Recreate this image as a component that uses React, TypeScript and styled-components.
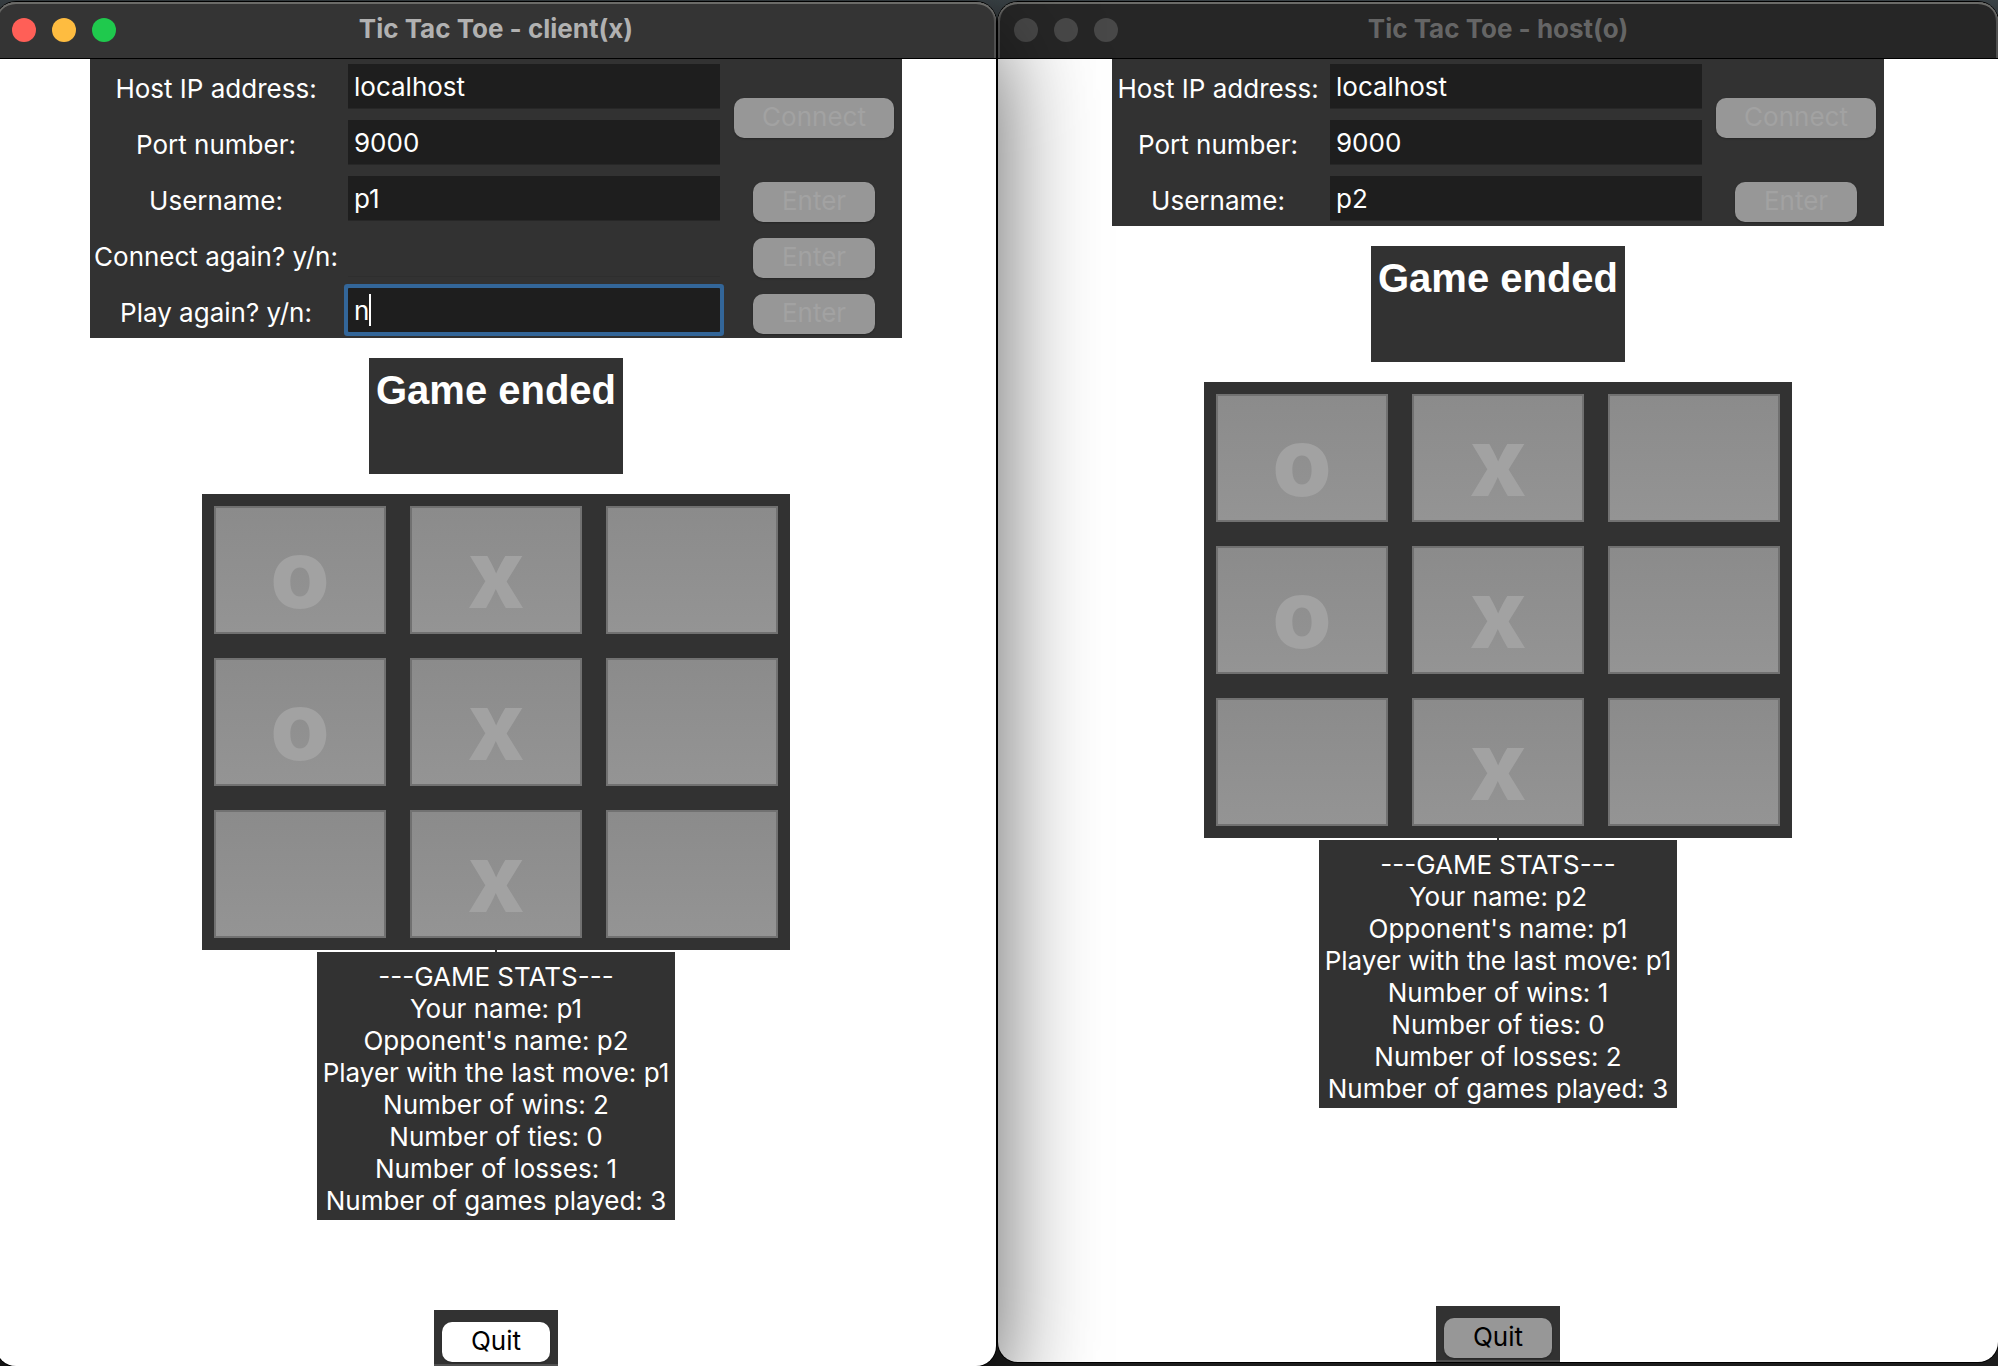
import React from 'react';
import styled, { createGlobalStyle } from 'styled-components';

const UI = `Inter, "Liberation Sans", sans-serif`;
const PANEL = '#323232';

const GlobalStyle = createGlobalStyle`
  * { box-sizing: border-box; }
  html, body, #root { height: 100%; }
  body {
    margin: 0;
    overflow: hidden;
    background: linear-gradient(#3a4246, #1c1c1c 64px);
    font-family: ${UI};
    font-size: 26px;
    line-height: 32px;
    color: #fff;
  }
`;

const Desktop = styled.main`
  display: grid;
  grid-template-columns: 1fr 1fr;
  gap: 2px;
  min-height: 100%;
  margin-left: -4px;
  padding-top: 2px;
`;

const Window = styled.section<{ $active: boolean }>`
  display: flex;
  flex-direction: column;
  position: relative;
  z-index: ${p => (p.$active ? 1 : 0)};
  margin-bottom: ${p => (p.$active ? 0 : 4)}px;
  border-radius: 20px;
  background: #fff;
  box-shadow: 0 0 0 1px #000${p => (p.$active ? ', 0 36px 100px rgba(0, 0, 0, 0.66)' : '')};
`;

const TitleBar = styled.header<{ $active: boolean }>`
  display: grid;
  grid-template-columns: 1fr auto 1fr;
  align-items: center;
  position: relative;
  height: 56px;
  padding: 0 16px;
  border-radius: 20px 20px 0 0;
  background: ${p => (p.$active ? '#343434' : '#262626')};
  color: ${p => (p.$active ? '#b1b1b1' : '#656565')};
  box-shadow: inset 0 2px 0 #6b6b68, inset 2px 0 0 #505050, inset -2px 0 0 #505050, 0 1px 0 #000;
`;

const Lights = styled.div`
  display: flex;
  gap: 16px;
`;

const Light = styled.button<{ $color: string }>`
  width: 24px;
  height: 24px;
  padding: 0;
  border: 0;
  border-radius: 50%;
  background: ${p => p.$color};
`;

const Title = styled.h1`
  margin: 0;
  padding-bottom: 2px;
  font-size: 26px;
  font-weight: 700;
  line-height: 32px;
`;

const Content = styled.div`
  display: flex;
  flex-direction: column;
  align-items: center;
  flex: 1;
`;

const Form = styled.form<{ $labelWidth: number }>`
  display: grid;
  grid-template-columns: ${p => p.$labelWidth}px 384px 176px;
  grid-auto-rows: 56px;
  background: ${PANEL};
`;

const Label = styled.label`
  grid-column: 1;
  padding-top: 3px;
  line-height: 56px;
  text-align: center;
  white-space: nowrap;
`;

const FieldCell = styled.div`
  grid-column: 2;
  position: relative;
  padding: 6px;
`;

const Field = styled.input<{ $focused?: boolean }>`
  display: block;
  width: 100%;
  height: 44px;
  padding: 0 6px;
  border: 0;
  outline: 0;
  border-radius: ${p => (p.$focused ? 1 : 0)}px;
  background: #1e1e1e;
  color: #fff;
  font: 26px/32px ${UI};
  box-shadow: ${p => (p.$focused ? '0 0 0 4px #336699' : '0 1px 0 #272727')};
  caret-color: transparent;
  &:disabled { background: #323232; box-shadow: 0 1px 0 #2e2e2e; }
`;

/* Steady insertion point, laid over the field after the text it holds. */
const CaretLine = styled.div`
  position: absolute;
  top: 12px;
  left: 12px;
  display: flex;
  pointer-events: none;
  color: transparent;
  &::after {
    content: '';
    width: 2px;
    height: 32px;
    background: #fff;
  }
`;

const ButtonCell = styled.div<{ $span: number }>`
  grid-column: 3;
  grid-row: span ${p => p.$span};
  display: flex;
  align-items: center;
  justify-content: center;
  padding-top: 8px;
`;

const PushButton = styled.button<{ $width: number; $white?: boolean }>`
  width: ${p => p.$width}px;
  height: 40px;
  padding: 0 0 2px;
  border: 0;
  border-radius: 10px;
  background: ${p => (p.$white ? '#fff' : '#979797')};
  box-shadow: 0 1px 2px rgba(0, 0, 0, 0.25);
  color: #000;
  font: 26px/32px ${UI};
  &:disabled { color: #a2a2a2; }
`;

const Status = styled.p`
  min-height: 116px;
  margin: 20px 0;
  padding: 9px 7px;
  background: ${PANEL};
  font: bold 40px/46px "Liberation Sans", Arial, sans-serif;
`;

const Board = styled.div`
  display: grid;
  grid-template-columns: repeat(3, 172px);
  grid-auto-rows: 128px;
  gap: 24px;
  padding: 12px;
  background: ${PANEL};
`;

const Cell = styled.button`
  padding: 6px 0 0;
  border: 2px solid #717171;
  background: linear-gradient(#8b8b8b, #949494);
  color: #a2a2a2;
  font: 800 96px/116px ${UI};
`;

const EmptyLabel = styled.div`
  width: 2px;
  height: 2px;
  background: ${PANEL};
`;

const Stats = styled.ul`
  width: 358px;
  margin: 0;
  padding: 9px 0 3px;
  list-style: none;
  background: ${PANEL};
  text-align: center;
  white-space: nowrap;
`;

const QuitFrame = styled.div`
  display: flex;
  margin-top: auto;
  padding: 12px 8px 2px;
  border-bottom: 2px solid #505050;
  background: ${PANEL};
`;

type Row = { label: string; value: string; action?: string; disabled?: boolean; focused?: boolean };

type Game = {
  id: string;
  title: string;
  active: boolean;
  labelWidth: number;
  rows: Row[];
  stats: string[];
};

const MARKS = ['o', 'x', '', 'o', 'x', '', '', 'x', ''];

const GAMES: Game[] = [
  {
    id: 'client',
    title: 'Tic Tac Toe - client(x)',
    active: true,
    labelWidth: 252,
    rows: [
      { label: 'Host IP address:', value: 'localhost', action: 'Connect' },
      { label: 'Port number:', value: '9000' },
      { label: 'Username:', value: 'p1', action: 'Enter' },
      { label: 'Connect again? y/n:', value: '', action: 'Enter', disabled: true },
      { label: 'Play again? y/n:', value: 'n', action: 'Enter', focused: true },
    ],
    stats: [
      '---GAME STATS---',
      'Your name: p1',
      "Opponent's name: p2",
      'Player with the last move: p1',
      'Number of wins: 2',
      'Number of ties: 0',
      'Number of losses: 1',
      'Number of games played: 3',
    ],
  },
  {
    id: 'host',
    title: 'Tic Tac Toe - host(o)',
    active: false,
    labelWidth: 212,
    rows: [
      { label: 'Host IP address:', value: 'localhost', action: 'Connect' },
      { label: 'Port number:', value: '9000' },
      { label: 'Username:', value: 'p2', action: 'Enter' },
    ],
    stats: [
      '---GAME STATS---',
      'Your name: p2',
      "Opponent's name: p1",
      'Player with the last move: p1',
      'Number of wins: 1',
      'Number of ties: 0',
      'Number of losses: 2',
      'Number of games played: 3',
    ],
  },
];

function FormRow({ id, row }: { id: string; row: Row }) {
  const [value, setValue] = React.useState(row.value);
  return (
    <>
      <Label htmlFor={id}>{row.label}</Label>
      <FieldCell>
        <Field
          id={id}
          value={value}
          onChange={e => setValue(e.target.value)}
          disabled={row.disabled}
          $focused={row.focused}
          autoFocus={row.focused}
        />
        {row.focused && <CaretLine aria-hidden="true">{value}</CaretLine>}
      </FieldCell>
      {row.action && (
        <ButtonCell $span={row.action === 'Connect' ? 2 : 1}>
          <PushButton type="button" disabled $width={row.action === 'Connect' ? 160 : 122}>
            {row.action}
          </PushButton>
        </ButtonCell>
      )}
    </>
  );
}

function GameWindow({ game }: { game: Game }) {
  const lights = game.active ? ['#ff5f57', '#febc40', '#1fc94d'] : ['#484848', '#484848', '#484848'];
  return (
    <Window $active={game.active}>
      <TitleBar $active={game.active}>
        <Lights>
          {['Close', 'Minimize', 'Zoom'].map((name, i) => (
            <Light key={name} type="button" aria-label={name} $color={lights[i]} />
          ))}
        </Lights>
        <Title>{game.title}</Title>
      </TitleBar>
      <Content>
        <Form $labelWidth={game.labelWidth} onSubmit={e => e.preventDefault()}>
          {game.rows.map((row, i) => (
            <FormRow key={row.label} id={`${game.id}-${i}`} row={row} />
          ))}
        </Form>
        <Status>Game ended</Status>
        <Board>
          {MARKS.map((mark, i) => (
            <Cell key={i} type="button" disabled aria-label={`Square ${i + 1} ${mark}`}>
              {mark}
            </Cell>
          ))}
        </Board>
        <EmptyLabel />
        <Stats>
          {game.stats.map(line => (
            <li key={line}>{line}</li>
          ))}
        </Stats>
        <QuitFrame>
          <PushButton type="button" $width={108} $white={game.active}>
            Quit
          </PushButton>
        </QuitFrame>
      </Content>
    </Window>
  );
}

export default function App() {
  return (
    <>
      <GlobalStyle />
      <Desktop>
        {GAMES.map(game => (
          <GameWindow key={game.id} game={game} />
        ))}
      </Desktop>
    </>
  );
}
